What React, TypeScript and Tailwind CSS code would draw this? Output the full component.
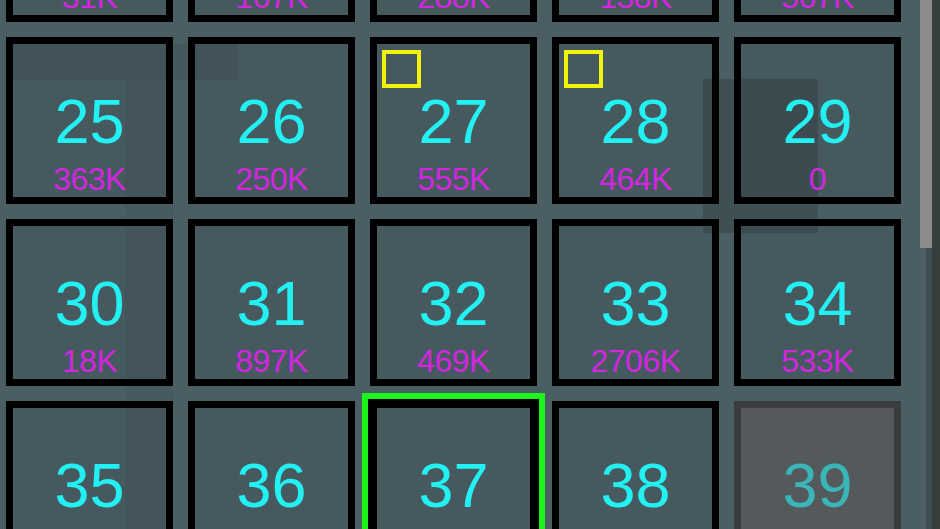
import React from "react";

type Tile = { n: number; v: string; mark?: boolean; sel?: boolean; off?: boolean };

const rows: Tile[][] = [
  [
    { n: 20, v: "31K" },
    { n: 21, v: "167K" },
    { n: 22, v: "288K" },
    { n: 23, v: "138K" },
    { n: 24, v: "567K" },
  ],
  [
    { n: 25, v: "363K" },
    { n: 26, v: "250K" },
    { n: 27, v: "555K", mark: true },
    { n: 28, v: "464K", mark: true },
    { n: 29, v: "0" },
  ],
  [
    { n: 30, v: "18K" },
    { n: 31, v: "897K" },
    { n: 32, v: "469K" },
    { n: 33, v: "2706K" },
    { n: 34, v: "533K" },
  ],
  [
    { n: 35, v: "412K" },
    { n: 36, v: "98K" },
    { n: 37, v: "721K", sel: true },
    { n: 38, v: "305K" },
    { n: 39, v: "0", off: true },
  ],
];

function TileBox({ t }: { t: Tile }) {
  const base = t.off
    ? "border-[#3a3d3e] bg-[#545a5c]"
    : "border-black bg-[#46595e]";
  const ring = t.sel ? "shadow-[0_0_0_2px_#000,0_0_0_8px_#1cf51c]" : "";
  return (
    <div
      className={`relative w-[167px] h-[167px] border-[7px] ${base} ${ring} flex flex-col items-center`}
    >
      {t.mark && (
        <div className="absolute left-[5px] top-[6px] w-[39px] h-[38px] border-[4px] border-[#f2f20a]" />
      )}
      <div
        className={`relative z-10 mt-[46px] text-[63px] leading-none ${
          t.off ? "text-[#3bb6b8]" : "text-[#22f0f2]"
        }`}
      >
        {t.n}
      </div>
      <div className="relative z-10 mt-[10px] text-[32px] leading-none tracking-[-0.5px] text-[#d226e0]">
        {t.v}
      </div>
    </div>
  );
}

export default function App() {
  return (
    <div
      className="relative w-[940px] h-[529px] overflow-hidden bg-[#4a5e63] flex"
      style={{ fontFamily: '"Liberation Sans", Arial, sans-serif' }}
    >
      <div className="flex-1 relative">
        <div className="mt-[-145px] ml-[6px] grid grid-cols-[repeat(5,167px)] gap-[15px]">
          {rows.flat().map((t) => (
            <TileBox key={t.n} t={t} />
          ))}
        </div>
        {/* subtle shading overlays */}
        <div className="absolute left-[703px] top-[79px] w-[115px] h-[154px] bg-black/15 pointer-events-none" />
        <div className="absolute left-[13px] top-[44px] w-[225px] h-[36px] bg-black/[0.06] pointer-events-none" />
        <div className="absolute left-[125px] top-[80px] w-[48px] h-[449px] bg-black/[0.04] pointer-events-none" />
      </div>
      <div className="w-[20px] h-full flex">
        <div className="w-[12px] flex flex-col">
          <div className="h-[248px] bg-[#8c8c8c]" />
          <div className="flex-1 ml-[6px] bg-[#3f4e51]" />
        </div>
        <div className="w-[8px] h-full bg-[#373e3e]" />
      </div>
    </div>
  );
}
